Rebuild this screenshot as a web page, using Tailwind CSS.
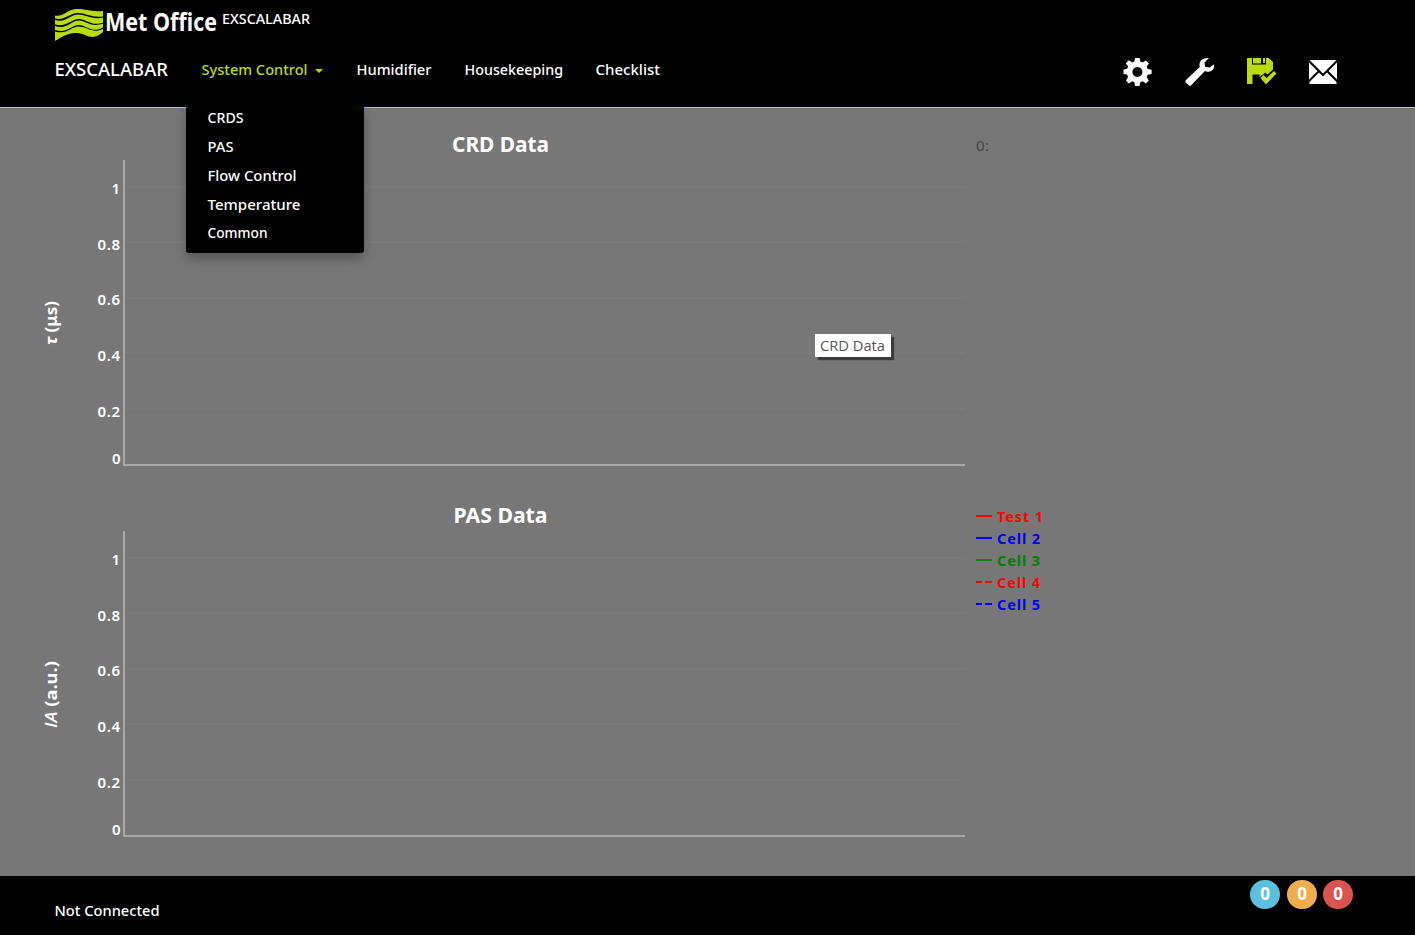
<!DOCTYPE html>
<html lang="en">
<head>
<meta charset="utf-8">
<title>EXSCALABAR</title>
<script src="https://cdn.jsdelivr.net/npm/@tailwindcss/browser@4"></script>
</head>
<body class="w-[1415px] h-[935px] overflow-hidden bg-[#777] flex flex-col text-white text-[15px] font-medium font-['Noto_Sans','Open_Sans',sans-serif]">
<header class="h-[108px] shrink-0 bg-black border-b border-[#b9dc0c] pl-[55px] flex justify-between">
  <div class="flex flex-col">
    <div class="h-[47px] flex items-start">
      <svg class="w-[48px] h-[32px] mt-[9px]" viewBox="0 0 48 32" fill="#b9dc0c">
        <path d="M0 6.500C9 8 13 0 22 0C31 0 36 3 48 2V7.500C37 9 31 4 23 4C14 4 10 12 0 9.500z"/>
        <path d="M0 11C11 14 15 5.500 23 5.500C31 5.500 37 11 48 8.500V13.500C37 18 31 10 24 10C16 10 11 19 0 15.500z"/>
        <path d="M0 17C12 21 16 11.500 24 11.500C31 11.500 36 19 48 14.500V18.500C37 25 31 16 24 16C16 16 12 25 0 21z"/>
        <path d="M0 22.500C12 26 16 17.500 24 17.500C32 17.500 37 25 48 20V23C41 29 36 29 30 26C17 21 10 26 0 32z"/>
      </svg>
      <svg class="w-[115px] h-[40px] ml-[2px] overflow-visible" viewBox="0 0 115 40"><text x="0" y="30.500" fill="#fff" font-size="25.500" font-weight="700" font-family="Open Sans" textLength="112" lengthAdjust="spacingAndGlyphs">Met Office</text></svg>
      <svg class="w-[92px] h-[40px] ml-[2px] overflow-visible" viewBox="0 0 92 40"><text x="0" y="24" fill="#fff" font-size="15" textLength="88" lengthAdjust="spacingAndGlyphs">EXSCALABAR</text></svg>
    </div>
    <nav class="h-[60px]">
      <svg class="w-[640px] h-[45px]" viewBox="0 0 640 45" fill="#fff" font-size="15">
        <text x="-.5" y="29" font-size="18.500" textLength="113.500" lengthAdjust="spacingAndGlyphs">EXSCALABAR</text>
        <text x="146.500" y="28" fill="#b9dc0c" textLength="106" lengthAdjust="spacingAndGlyphs">System Control</text>
        <path d="M260 22h8l-4 4z" fill="#b9dc0c"/>
        <text x="301.500" y="28" textLength="75" lengthAdjust="spacingAndGlyphs">Humidifier</text>
        <text x="409.500" y="28" textLength="98.500" lengthAdjust="spacingAndGlyphs">Housekeeping</text>
        <text x="540.500" y="28" textLength="64.500" lengthAdjust="spacingAndGlyphs">Checklist</text>
      </svg>
    </nav>
  </div>
  <div class="flex gap-[32px] pt-[57px] pr-[76px]">
    <svg class="w-[30px] h-[30px]" viewBox="0 0 30 30" fill="#fff" fill-rule="evenodd"><path d="M12.200 1h4.400l.7 3.600 2.300 1 3.300-2.200 3 3-2.200 3.200 1 2.300 3.900.8v4.400l-3.900.7-1 2.400 2.200 3.200-3 3-3.300-2.200-2.300 1-.7 3.800h-4.400l-.8-3.800-2.300-1-3.200 2.200-3-3L5.100 20l-1-2.400-3.600-.7v-4.400l3.600-.8 1-2.300-2.200-3.200 3-3 3.200 2.200 2.300-1zM14.400 10a5 5 0 1 0 .01 0z"/></svg>
    <svg class="w-[30px] h-[30px]" viewBox="0 0 30 30" fill="#fff"><path d="M24 1l-4.500 4.400.7 4.500 4.500.7 4.400-3.400c.6 4-1.700 7.300-5.600 7.600-1.500.1-2.800-.2-3.600-.7L6.200 28.200c-.8.8-1.800.8-2.600 0L1 25.700c-.8-.8-.8-1.800 0-2.600L14.800 10C13.300 4.500 17 .5 24 1z"/></svg>
    <svg class="w-[30px] h-[30px]" viewBox="0 0 30 30" fill="#b9dc0c"><path d="M0 1H5V7.500H19V1H21.500L26 5V12.500L20.500 17.500L18.500 15.500L12.500 20V17.500H5.500V27H0z"/><path d="M6 1h8v5.500H6zM16 1h2v5h-2zM13.500 21l3-3 3 3 7.500-7 2.500 2.500L19 27.500z"/></svg>
    <svg class="w-[30px] h-[30px] -ml-px mr-px" viewBox="0 0 30 30" fill="#fff"><path d="M1.500 3h27L15 16.500zM1 5.500l8.500 8.500L1 22.500zM29 5.500L20.500 14l8.500 8.500zM11 15.500l4 4 4-4L28.500 25v2h-27v-2z"/></svg>
  </div>
</header>
<main class="h-[768px] shrink-0">
  <svg class="w-[1415px] h-[768px]" viewBox="0 108 1415 768" fill="#fff" font-size="15">
    <defs>
      <g id="grid">
        <path d="M125 187H965M125 242H965M125 298H965M125 353H965M125 409H965" stroke="#7a7a7a" stroke-width="2"/>
        <path d="M124 160V465H965" fill="none" stroke="#a8a8a8" stroke-width="2"/>
        <g text-anchor="end" font-weight="600"><text x="120" y="194">1</text><text x="120" y="250" textLength="22.500">0.8</text><text x="120" y="305" textLength="22.500">0.6</text><text x="120" y="361" textLength="22.500">0.4</text><text x="120" y="417" textLength="22.500">0.2</text><text x="120.500" y="464">0</text></g>
      </g>
    </defs>
    <use href="#grid"/>
    <use href="#grid" y="371"/>
    <g font-size="22" font-weight="700"><text x="452" y="152" textLength="97" lengthAdjust="spacingAndGlyphs">CRD Data</text><text x="453.500" y="523" textLength="94" lengthAdjust="spacingAndGlyphs">PAS Data</text></g>
    <g font-size="16" font-weight="700">
      <text transform="translate(57 345) rotate(-90)" textLength="44" lengthAdjust="spacingAndGlyphs"><tspan font-style="italic">τ</tspan> (μs)</text>
      <text transform="translate(57 728) rotate(-90)" textLength="67" lengthAdjust="spacingAndGlyphs"><tspan font-family="Open Sans" font-style="italic" font-weight="600">IA</tspan> (a.u.)</text>
    </g>
    <text x="976" y="151" fill="#444" font-weight="400" textLength="13">0:</text>
    <g stroke-width="2"><path d="M976 516h16" stroke="red"/><path d="M976 538h16" stroke="blue"/><path d="M976 560h16" stroke="green"/><path d="M976 582h16" stroke="red" stroke-dasharray="6 3 7"/><path d="M976 604h16" stroke="blue" stroke-dasharray="6 3 7"/></g>
    <g font-size="14.500" font-weight="700"><text x="997" y="522" fill="red" textLength="46">Test 1</text><text x="997" y="544" fill="blue" textLength="43">Cell 2</text><text x="997" y="566" fill="green" textLength="43">Cell 3</text><text x="997" y="588" fill="red" textLength="43">Cell 4</text><text x="997" y="610" fill="blue" textLength="43">Cell 5</text></g>
  </svg>
</main>
<footer class="h-[59px] shrink-0 bg-black pl-[55px] pr-[62px] flex justify-between">
  <svg class="w-[120px] h-[59px]" viewBox="0 0 120 59" fill="#fff" font-size="15"><text x="-.5" y="40" textLength="105" lengthAdjust="spacingAndGlyphs">Not Connected</text></svg>
  <div class="flex gap-[7px] pt-[4px] font-bold text-[17px] leading-[28px] text-center">
    <span class="w-[30px] h-[29px] rounded-full bg-[#5bc0de]">0</span>
    <span class="w-[30px] h-[29px] rounded-full bg-[#f0ad4e]">0</span>
    <span class="w-[30px] h-[29px] rounded-full bg-[#d9534f] -ml-px">0</span>
  </div>
</footer>
<div class="absolute left-[186px] top-[104px] w-[178px] h-[149px] bg-black rounded-b-[3px] shadow-[0_6px_12px_rgba(0,0,0,0.28)]">
  <svg class="w-[178px] h-[149px]" viewBox="0 0 178 149" fill="#fff" font-size="15">
    <text x="21.500" y="19" textLength="36" lengthAdjust="spacingAndGlyphs">CRDS</text>
    <text x="21.500" y="48" textLength="26" lengthAdjust="spacingAndGlyphs">PAS</text>
    <text x="21.500" y="77" textLength="89" lengthAdjust="spacingAndGlyphs">Flow Control</text>
    <text x="21.500" y="106" textLength="93" lengthAdjust="spacingAndGlyphs">Temperature</text>
    <text x="21.500" y="134" textLength="60" lengthAdjust="spacingAndGlyphs">Common</text>
  </svg>
</div>
<div class="absolute left-[815px] top-[334px] w-[76px] h-[23px] bg-white shadow-[3px_3px_1px_rgba(0,0,0,0.5)]">
  <svg class="w-[76px] h-[23px]" viewBox="0 0 76 23"><text x="5" y="17" fill="#555" font-family="Open Sans" font-weight="400" font-size="15" textLength="65" lengthAdjust="spacingAndGlyphs">CRD Data</text></svg>
</div>
</body>
</html>
